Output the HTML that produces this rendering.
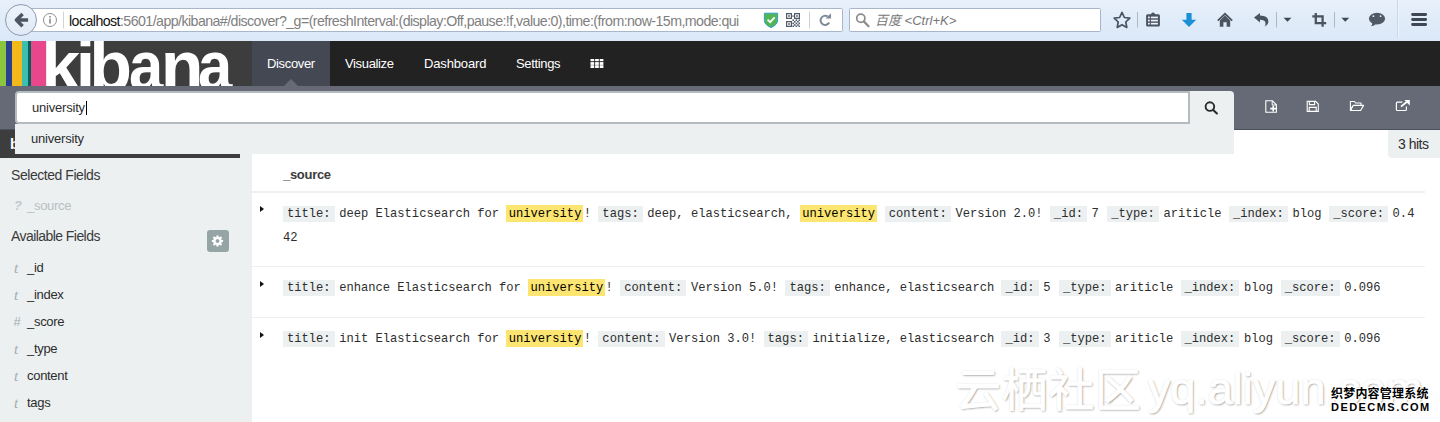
<!DOCTYPE html>
<html lang="en">
<head>
<meta charset="utf-8">
<title>Discover - Kibana</title>
<style>
*{box-sizing:border-box;margin:0;padding:0}
html,body{width:1440px;height:422px;overflow:hidden;background:#fff}
body{position:relative;font-family:"Liberation Sans","Noto Sans CJK SC",sans-serif;font-size:13px;color:#2d2d2d}
.abs{position:absolute}
/* ---------- browser chrome ---------- */
#chrome{left:0;top:0;width:1440px;height:41px;background:linear-gradient(#e8f0fa,#e1ecf9 45%,#dbe8f7)}
#urlbar{left:20px;top:8px;width:823px;height:24px;background:#fff;border:1px solid #a7b6c8;border-radius:1.5px}
#back{left:5px;top:4px;width:32px;height:32px;border-radius:50%;background:linear-gradient(#edf3fb,#e0eaf6);border:1px solid #8c9bb0}
#url{left:69px;top:12px;height:18px;line-height:18px;font-size:14.2px;color:#808080;white-space:nowrap;letter-spacing:-0.56px}
#url b{font-weight:normal;color:#111}
#searchbox{left:849px;top:8px;width:252px;height:24px;background:#fff;border:1px solid #a7b6c8;border-radius:1.5px}
#searchtxt{left:875px;top:12px;height:18px;line-height:18px;font-size:13px;font-style:italic;color:#777;white-space:nowrap}
.vsep{width:1px;background:#b9c4d2}
/* ---------- kibana nav ---------- */
#nav{left:0;top:41px;width:1440px;height:45px;background:#222}
#logo{left:0;top:41px;width:252px;height:45px;background:#3d3d3d;overflow:hidden}
#logo i{position:absolute;top:0;height:45px;display:block}
#logotxt{left:0;top:-24.7px;height:100px;font-size:70px;font-weight:bold;color:#fff;line-height:100px;white-space:nowrap}
#logotxt span{position:absolute;top:0;display:block;transform-origin:0 0}
.tab{top:41px;height:45px;line-height:45px;color:#fff;font-size:13px;white-space:nowrap;letter-spacing:-0.35px}
#tab-active{left:252px;top:41px;width:78px;height:45px;background:#444852}
#tri{left:284px;top:79px;width:0;height:0;border-left:7px solid transparent;border-right:7px solid transparent;border-bottom:7px solid #656a76}
/* ---------- search band ---------- */
#band{left:0;top:86px;width:1440px;height:44px;background:#656a76;border-bottom:1px solid #4b505d}
#qinput{left:15px;top:91px;width:1175px;height:33px;background:#fff;border:2px solid #b4bcc2;border-right-width:2px;border-radius:4px 0 0 4px}
#qbtn{left:1190px;top:91px;width:44px;height:33px;background:#ecf0f1;border-radius:0 4px 0 0}
#qtext{left:32px;top:99px;height:18px;line-height:18px;font-size:13px;color:#2d2d2d;letter-spacing:-0.2px}
#caret{left:86px;top:100.5px;width:1px;height:14.5px;background:#000}
#dropdown{left:15px;top:124px;width:1219px;height:30px;background:#ecf0f1}
#ddtext{left:31px;top:130px;height:18px;line-height:18px;font-size:13px;color:#2d2d2d;letter-spacing:-0.2px}
/* ---------- sidebar ---------- */
#sidebar{left:0;top:130px;width:252px;height:292px;background:#ecf0f1}
#idxbar{left:0;top:130px;width:240px;height:28px;background:#3d3d3d}
#idxtxt{left:10px;top:134.5px;font-weight:bold;color:#fff;font-size:14.5px;line-height:18px}
.sbh{left:11px;height:18px;line-height:18px;font-size:14px;color:#3a3a3a;letter-spacing:-0.45px;white-space:nowrap}
.fld{left:27px;height:18px;line-height:18px;font-size:13px;letter-spacing:-0.3px;color:#2d2d2d;white-space:nowrap}
.fic{left:14px;width:10px;height:18px;line-height:18px;font-size:15px;color:#a4acaf;font-family:"Liberation Serif",serif;font-style:italic;white-space:nowrap}
#gear{left:207px;top:230px;width:22px;height:22px;background:#95a5a6;border-radius:3px}
/* ---------- hits ---------- */
#hits{left:1388px;top:130px;width:52px;height:28px;background:#ecf0f1;border-radius:0 0 0 4px}
#hitstxt{left:1398px;top:135px;height:18px;line-height:18px;font-size:14px;color:#2d2d2d;white-space:nowrap;letter-spacing:-0.5px}
/* ---------- table ---------- */
#th{left:283px;top:166px;height:18px;line-height:18px;font-size:13px;letter-spacing:-0.3px;font-weight:bold;color:#3c3c3c}
.hline{left:252px;width:1173px;background:#ecf0f1}
.row{left:283px;width:1135px;font-family:"Liberation Mono",monospace;font-size:12.12px;line-height:24px;color:#2d2d2d;word-break:break-all}
.row dt,.row dd{display:inline;font-weight:normal}
.row dt{background:#ecf0f1;padding:1px 4px;margin-right:4.6px;word-break:normal}
.row mark{background:#fce571;color:#000;padding:1.8px 1.6px 1.2px 2.4px;margin-right:.8px}
.tog{left:260px;width:0;height:0;border-top:3.5px solid transparent;border-bottom:3.5px solid transparent;border-left:4px solid #111}
/* ---------- watermarks ---------- */
#wm1{left:955px;top:362px;font-size:46px;line-height:56px;color:#fff;white-space:nowrap;text-shadow:1px 1px 2px rgba(0,0,0,.4),0 0 2px rgba(0,0,0,.16);-webkit-text-stroke:1px #fff}
#wm1 .cjk{letter-spacing:.6px}
#wm1 .lat{font-size:45px;margin-left:-6.4px;position:relative;top:-2px}
#wm2a{left:1331px;top:386px;font-size:12px;line-height:16px;font-weight:bold;color:#000;white-space:nowrap;text-shadow:0 0 1px #fff,0 0 2px #fff,1px 1px 0 #fff,-1px -1px 0 #fff,1px -1px 0 #fff,-1px 1px 0 #fff;letter-spacing:.2px}
#wm2b{left:1331px;top:400.3px;font-size:11px;line-height:14px;font-weight:bold;color:#000;white-space:nowrap;text-shadow:0 0 1px #fff,0 0 2px #fff,1px 1px 0 #fff,-1px -1px 0 #fff,1px -1px 0 #fff,-1px 1px 0 #fff;letter-spacing:1.45px}
</style>
</head>
<body>

<!-- browser chrome -->
<div id="chrome" class="abs"></div>
<div id="urlbar" class="abs"></div>
<div id="back" class="abs"></div>
<div id="url" class="abs"><b>localhost</b>:5601/app/kibana#/discover?_g=(refreshInterval:(display:Off,pause:!f,value:0),time:(from:now-15m,mode:qui</div>
<div id="searchbox" class="abs"></div>
<div id="searchtxt" class="abs">百度 &lt;Ctrl+K&gt;</div>
<svg class="abs" style="left:0;top:0" width="1440" height="41" viewBox="0 0 1440 41">
  <!-- back arrow -->
  <path d="M22.6 13.9 L16.4 20.1 L22.6 26.3 M17 20.1 H28.1" fill="none" stroke="#4d5663" stroke-width="3.5" stroke-linecap="butt" stroke-linejoin="round"/>
  <!-- info icon -->
  <circle cx="50" cy="20" r="6.5" fill="#fff" stroke="#8f8f8f" stroke-width="1"/>
  <rect x="49.2" y="18.6" width="1.6" height="5" fill="#8a8a8a"/><rect x="49.2" y="16" width="1.6" height="1.6" fill="#8a8a8a"/>
  <rect x="63" y="11.5" width="1" height="17" fill="#d3d3d3"/>
  <!-- shield -->
  <path d="M764.4 13.2 H777.6 V20.5 Q777.6 24.6 771 27.6 Q764.4 24.6 764.4 20.5 Z" fill="#52b556" stroke="#2f9fc4" stroke-width="1"/>
  <path d="M767.6 19.6 L770.2 22.2 L774.6 17.4" fill="none" stroke="#fff" stroke-width="1.8"/>
  <!-- qr -->
  <g fill="#4f5a67">
    <path d="M786 13h6v6h-6z M787.2 14.200000000000001v3.6h3.6v-3.6z" fill-rule="evenodd"/>
    <rect x="788.2" y="15.2" width="1.6" height="1.6"/>
    <path d="M794 13h6v6h-6z M795.2 14.200000000000001v3.6h3.6v-3.6z" fill-rule="evenodd"/>
    <rect x="796.2" y="15.2" width="1.6" height="1.6"/>
    <path d="M786 21h6v6h-6z M787.2 22.2v3.6h3.6v-3.6z" fill-rule="evenodd"/>
    <rect x="788.2" y="23.2" width="1.6" height="1.6"/>
    <rect x="792.4" y="15.4" width="1.4" height="1.4"/>
    <rect x="792.4" y="19.4" width="1.6" height="1.6"/><rect x="795.6" y="19.4" width="1.6" height="1.6"/><rect x="798.6" y="19.4" width="1.4" height="1.6"/>
    <rect x="794" y="21" width="1.6" height="1.6"/><rect x="797.2" y="21" width="1.6" height="1.6"/>
    <rect x="792.4" y="22.6" width="1.6" height="1.6"/><rect x="795.6" y="22.6" width="1.6" height="1.6"/><rect x="798.6" y="22.6" width="1.4" height="1.6"/>
    <rect x="794" y="24.2" width="1.6" height="1.6"/><rect x="797.2" y="24.2" width="1.6" height="1.6"/>
    <rect x="792.4" y="25.6" width="1.6" height="1.4"/><rect x="795.6" y="25.6" width="1.6" height="1.4"/><rect x="798.6" y="25.6" width="1.4" height="1.4"/>
  </g>
  <rect x="809" y="11.5" width="1" height="17" fill="#cfcfcf"/>
  <!-- reload -->
  <path d="M829.2 22.6 A4.6 4.6 0 1 1 827.6 16.4" fill="none" stroke="#7f8b99" stroke-width="2"/>
  <path d="M825.6 18.6 L831 18.6 L831 13.2 Z" fill="#7f8b99"/>
  <!-- search magnifier -->
  <circle cx="860.8" cy="18.3" r="4.1" fill="none" stroke="#8c8c8c" stroke-width="1.7"/>
  <path d="M863.8 21.4 L868.6 26.2" stroke="#8c8c8c" stroke-width="2.2" stroke-linecap="round"/>
  <!-- star -->
  <path d="M1122 13 L1124.4 18.1 L1129.8 18.8 L1125.8 22.6 L1126.8 28 L1122 25.3 L1117.2 28 L1118.2 22.6 L1114.2 18.8 L1119.6 18.100000000000001 Z" transform="translate(0,-.6)" fill="none" stroke="#4a5360" stroke-width="1.7" stroke-linejoin="round"/>
  <rect x="1137" y="12" width="1" height="15.5" fill="#aeb7c3"/>
  <!-- clipboard list -->
  <path d="M1147.6 14.2 H1150.4 L1153 12.3 L1155.6 14.2 H1158.4 Q1159.9 14.2 1159.9 15.7 V24.9 Q1159.9 26.4 1158.4 26.4 H1147.6 Q1146.1 26.4 1146.1 24.9 V15.7 Q1146.1 14.2 1147.6 14.2 Z" fill="#4a5360"/>
  <g fill="#eef3fa"><rect x="1148" y="16.6" width="1.8" height="1.7"/><rect x="1150.9" y="16.6" width="7" height="1.7"/><rect x="1148" y="19.7" width="1.8" height="1.7"/><rect x="1150.9" y="19.7" width="7" height="1.7"/><rect x="1148" y="22.8" width="1.8" height="1.7"/><rect x="1150.9" y="22.8" width="7" height="1.7"/></g>
  <!-- download arrow -->
  <path d="M1186.4 12.9 H1191.6 V19.8 H1196.2 L1189 27.1 L1181.8 19.8 H1186.4 Z" fill="#1b90d8"/>
  <!-- home -->
  <path d="M1217.8 20.6 L1225 13.8 L1232.2 20.6" fill="none" stroke="#4a5360" stroke-width="1.8"/>
  <path d="M1219.8 20.4 L1225 15.6 L1230.2 20.4 V26.7 H1226.6 V22.2 H1223.4 V26.7 H1219.8 Z" fill="#4a5360"/>
  <!-- undo -->
  <path d="M1254 17.6 L1260 12.9 V15.6 Q1268.4 15.8 1268.4 21.6 Q1268.4 25 1264.4 26.6 Q1266 24.6 1265.4 22.4 Q1264.6 19.8 1260 19.7 V22.4 Z" fill="#4a5360"/>
  <rect x="1276" y="12" width="1" height="15.5" fill="#aeb7c3"/>
  <path d="M1283.6 17.8 H1291.4 L1287.5 21.8 Z" fill="#3f4853"/>
  <!-- crop -->
  <path d="M1315.8 12.9 V23.2 H1326.2 M1312.3 16.4 H1322.6 V26.7" fill="none" stroke="#4a5360" stroke-width="2.3"/>
  <rect x="1334" y="12" width="1" height="15.5" fill="#aeb7c3"/>
  <path d="M1341.4 17.8 H1349.2 L1345.3 21.8 Z" fill="#3f4853"/>
  <!-- chat -->
  <ellipse cx="1377" cy="18.6" rx="8.1" ry="5.8" fill="#505a67"/>
  <path d="M1372.4 22.6 Q1372.6 25 1370.6 26.2 Q1374.6 26.2 1376.4 23.6 Z" fill="#505a67"/>
  <circle cx="1373.4" cy="16.2" r="0.9" fill="#e8eef7"/><circle cx="1380.6" cy="16.2" r="0.9" fill="#e8eef7"/>
  <!-- long sep -->
  <rect x="1397" y="0" width="1" height="38" fill="#cbd7e6"/><rect x="1398" y="0" width="1" height="38" fill="#eef4fc"/>
  <!-- hamburger -->
  <g fill="#3e4752"><rect x="1411.2" y="12.9" width="15.8" height="3" rx="1.3"/><rect x="1411.2" y="17.9" width="15.8" height="3" rx="1.3"/><rect x="1411.2" y="22.9" width="15.8" height="3" rx="1.3"/></g>
</svg>


<!-- kibana nav -->
<div id="nav" class="abs"></div>
<div id="logo" class="abs">
  <i style="left:0;width:6px;background:#8bc53f"></i>
  <i style="left:6px;width:6px;background:#2a3f8f"></i>
  <i style="left:12px;width:10px;background:#f3b81a"></i>
  <i style="left:22px;width:6px;background:#3cbeb1"></i>
  <i style="left:28px;width:3px;background:#07605a"></i>
  <i style="left:31px;width:15px;background:#e8478b"></i>
  <div id="logotxt" class="abs"><span style="left:41.2px">k</span><span style="left:75.7px">i</span><span style="left:89.2px">b</span><span style="left:129.2px;transform:scaleX(.88)">a</span><span style="left:160.7px">n</span><span style="left:197.9px;transform:scaleX(.88)">a</span></div>
</div>
<div id="tab-active" class="abs"></div>
<div id="tri" class="abs"></div>
<div class="abs tab" style="left:267px">Discover</div>
<div class="abs tab" style="left:345px">Visualize</div>
<div class="abs tab" style="left:424px;letter-spacing:-.15px">Dashboard</div>
<div class="abs tab" style="left:516px">Settings</div>

<!-- search band -->
<div id="band" class="abs"></div>
<div id="qinput" class="abs"></div>
<div id="qbtn" class="abs"></div>
<div id="qtext" class="abs">university</div>
<div id="caret" class="abs"></div>

<!-- sidebar -->
<div id="sidebar" class="abs"></div>
<div id="idxbar" class="abs"></div>
<div id="idxtxt" class="abs">blog</div>
<div class="abs sbh" style="top:166.4px">Selected Fields</div>
<div class="abs fic" style="top:197px;color:#c3c9cb;font-family:'Liberation Sans',sans-serif;font-weight:bold;font-size:13px">?</div>
<div class="abs fld" style="top:197px;color:#b8bfc2">_source</div>
<div class="abs sbh" style="top:227.4px;letter-spacing:-.56px">Available Fields</div>
<div id="gear" class="abs"></div>
<div class="abs fic" style="top:258.5px">t</div><div class="abs fld" style="top:258.5px">_id</div>
<div class="abs fic" style="top:285.6px">t</div><div class="abs fld" style="top:285.6px">_index</div>
<div class="abs fic" style="top:312.8px;font-family:'Liberation Sans',sans-serif;font-style:normal;left:13.5px;font-size:13px">#</div><div class="abs fld" style="top:312.8px">_score</div>
<div class="abs fic" style="top:340px">t</div><div class="abs fld" style="top:340px">_type</div>
<div class="abs fic" style="top:367.1px">t</div><div class="abs fld" style="top:367.1px">content</div>
<div class="abs fic" style="top:394.2px">t</div><div class="abs fld" style="top:394.2px">tags</div>

<!-- typeahead dropdown (over sidebar) -->
<div id="dropdown" class="abs"></div>
<div id="ddtext" class="abs">university</div>


<svg class="abs" style="left:0;top:41px" width="1440" height="120" viewBox="0 41 1440 120">
  <!-- grid icon -->
  <g fill="#fff">
    <rect x="590.5" y="59" width="3.7" height="2.2"/><rect x="595.1" y="59" width="3.7" height="2.2"/><rect x="599.7" y="59" width="3.7" height="2.2"/>
    <rect x="590.5" y="62.1" width="3.7" height="2.8"/><rect x="595.1" y="62.1" width="3.7" height="2.8"/><rect x="599.7" y="62.1" width="3.7" height="2.8"/>
    <rect x="590.5" y="65.2" width="3.7" height="2.8"/><rect x="595.1" y="65.2" width="3.7" height="2.8"/><rect x="599.7" y="65.2" width="3.7" height="2.8"/>
  </g>
  <!-- search button magnifier -->
  <circle cx="1209.9" cy="106.6" r="4.3" fill="none" stroke="#2b2b2b" stroke-width="1.9"/>
  <path d="M1213.2 110 L1216.9 113.5" stroke="#2b2b2b" stroke-width="2.1" stroke-linecap="round"/>
  <!-- new file -->
  <path d="M1265.8 100.8 H1272.4 L1276.4 104.8 V112.2 H1265.8 Z" fill="none" stroke="#fff" stroke-width="1.1"/>
  <path d="M1272.2 100.8 V105 H1276.4" fill="none" stroke="#fff" stroke-width="1"/>
  <path d="M1270.2 108.6 H1276 M1273.2 105.8 V111.4" fill="none" stroke="#fff" stroke-width="1.6"/>
  <!-- floppy -->
  <path d="M1307.2 101.4 H1315.6 L1318.3 104 V111.4 H1307.2 Z" fill="none" stroke="#fff" stroke-width="1.1"/>
  <path d="M1309.4 101.4 V104.6 H1314.6 V101.4" fill="none" stroke="#fff" stroke-width="1.1"/>
  <path d="M1309.2 111.4 V107.4 H1316.2 V111.4" fill="none" stroke="#fff" stroke-width="1.1"/>
  <!-- folder open -->
  <path d="M1352.6 106 L1350.4 110.4 V101.5 H1354.4 L1355.6 103 H1361 V105" fill="none" stroke="#fff" stroke-width="1.1" stroke-linejoin="round"/>
  <path d="M1353.2 105.4 H1363.6 L1360.6 110.5 H1350.4 Z" fill="none" stroke="#fff" stroke-width="1.1" stroke-linejoin="round"/>
  <!-- external link -->
  <path d="M1406.4 106.4 V109.4 Q1406.4 110.5 1405.3 110.5 H1397.5 Q1396.4 110.5 1396.4 109.4 V103.2 Q1396.4 102.1 1397.5 102.1 H1402.4" fill="none" stroke="#fff" stroke-width="1.2"/>
  <path d="M1401 106.6 L1407.6 101.2" stroke="#fff" stroke-width="1.8"/>
  <path d="M1404.4 100.1 H1409.8 V105.4 Z" fill="#fff"/>
</svg>
<svg class="abs" style="left:207px;top:230px" width="22" height="22" viewBox="0 0 22 22">
  <g transform="translate(10.5,11)">
    <circle r="3.1" fill="none" stroke="#fff" stroke-width="2.4"/>
    <g stroke="#fff" stroke-width="2.2">
      <path d="M0 -5.6V-3.6 M0 5.6V3.6 M-5.6 0H-3.6 M5.6 0H3.6"/>
      <path d="M0 -5.6V-3.6 M0 5.6V3.6 M-5.6 0H-3.6 M5.6 0H3.6" transform="rotate(45)"/>
    </g>
  </g>
</svg>

<!-- hits -->
<div id="hits" class="abs"></div>
<div id="hitstxt" class="abs">3 hits</div>

<!-- table -->
<div id="th" class="abs">_source</div>
<div class="abs hline" style="top:191px;height:2px"></div>
<div class="abs hline" style="top:266px;height:1px"></div>
<div class="abs hline" style="top:317px;height:1px"></div>
<div class="abs tog" style="top:206px"></div>
<div class="abs tog" style="top:281px"></div>
<div class="abs tog" style="top:332px"></div>

<dl class="abs row" style="top:202px"><dt>title:</dt><dd>deep Elasticsearch for <mark>university</mark>!</dd> <dt>tags:</dt><dd>deep, elasticsearch, <mark>university</mark></dd> <dt>content:</dt><dd>Version 2.0!</dd> <dt>_id:</dt><dd>7</dd> <dt style="margin-left:1.2px">_type:</dt><dd>ariticle</dd> <dt>_index:</dt><dd>blog</dd> <dt style="margin-left:.4px">_score:</dt><dd>0.442</dd> </dl>
<dl class="abs row" style="top:276px"><dt>title:</dt><dd>enhance Elasticsearch for <mark>university</mark>!</dd> <dt>content:</dt><dd>Version 5.0!</dd> <dt>tags:</dt><dd>enhance, elasticsearch</dd> <dt>_id:</dt><dd>5</dd> <dt style="margin-left:1.2px">_type:</dt><dd>ariticle</dd> <dt>_index:</dt><dd>blog</dd> <dt style="margin-left:.4px">_score:</dt><dd>0.096</dd> </dl>
<dl class="abs row" style="top:327px"><dt>title:</dt><dd>init Elasticsearch for <mark>university</mark>!</dd> <dt>content:</dt><dd>Version 3.0!</dd> <dt>tags:</dt><dd>initialize, elasticsearch</dd> <dt>_id:</dt><dd>3</dd> <dt style="margin-left:1.2px">_type:</dt><dd>ariticle</dd> <dt>_index:</dt><dd>blog</dd> <dt style="margin-left:.4px">_score:</dt><dd>0.096</dd> </dl>

<!-- watermarks -->
<div id="wm1" class="abs"><span class="cjk">云栖社区</span> <span class="lat">yq.aliyun.com</span></div>
<div id="wm2a" class="abs">织梦内容管理系统</div>
<div id="wm2b" class="abs">DEDECMS.COM</div>

</body>
</html>
